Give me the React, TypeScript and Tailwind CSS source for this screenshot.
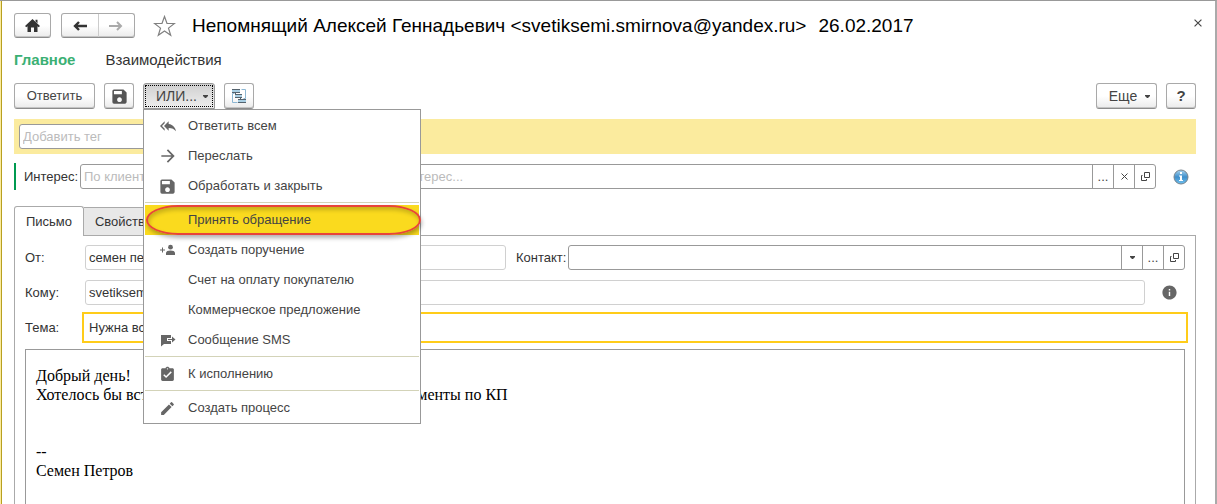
import { useState, type ReactNode } from "react";
import {
  MdArrowForward,
  MdAssignmentTurnedIn,
  MdEdit,
  MdInfo,
  MdReplyAll,
  MdSave,
} from "react-icons/md";

const buttonBase =
  "flex items-center justify-center rounded-[3px] border border-[#a9a9a9] border-b-[#8c8c8c] bg-linear-to-b from-white from-50% to-[#ebebeb] text-[#444] shadow-[inset_0_-1px_0_#c4c4c4]";

function Caret() {
  return (
    <svg width="5" height="3" viewBox="0 0 5 3" fill="#444" aria-hidden="true">
      <path d="M0 0h5v1L3 3H2L0 1z" />
    </svg>
  );
}

function HomeIcon() {
  return (
    <svg width="15" height="13" viewBox="0 0 15 13" fill="#333" aria-hidden="true">
      <path d="M7.500 0L15 7l-1.300 1.200L12.500 7.200V13H9V8.500H6V13H2.500V7.200L1.300 8.200 0 7z" />
      <path d="M10.500.8h2v3.500l-2-1.800z" />
    </svg>
  );
}

function StarIcon() {
  return (
    <svg width="23" height="22" viewBox="0 0 23 22" fill="none" stroke="#808080" strokeWidth="1.2" aria-hidden="true">
      <path d="M11.500 1.500l2.500 7h7.500l-6 4.600 2.200 7.200-6.200-4.300-6.200 4.300 2.200-7.200-6-4.600H9z" />
    </svg>
  );
}

function OpenIcon() {
  return (
    <svg width="9" height="9" viewBox="0 0 9 9" fill="none" stroke="#444" aria-hidden="true">
      <path d="M3.500 .5h5v5h-5zM1.500 3.500h-1v5h5v-1.500" />
    </svg>
  );
}

function CrossIcon({ size }: { size: number }) {
  return (
    <svg width={size} height={size} viewBox="0 0 7 7" stroke="#444" aria-hidden="true">
      <path d="M.5 .5l6 6M6.500 .5l-6 6" />
    </svg>
  );
}

function StructureIcon() {
  return (
    <svg width="16" height="16" viewBox="0 0 16 16" fill="none" aria-hidden="true">
      <path d="M3.500 5.500h-2v9h5M10.500 1.500h4v9h-2" stroke="#8db7d3" />
      <path d="M4.500 4v3.500M9.500 9.500V12" stroke="#55636e" />
      <path d="M1 2h8v2H1zM4 7h7v2H4zM7 12h8v2H7z" fill="#a9cfe4" />
      <path d="M1 1h8v1H1zM1 4h8v1H1zM4 6h7v1H4zM4 9h7v1H4zM7 11h8v1H7zM7 14h8v1H7z" fill="#55636e" />
    </svg>
  );
}

function AddPersonIcon() {
  return (
    <svg width="16" height="16" viewBox="0 0 16 16" fill="#666" aria-hidden="true">
      <circle cx="10.500" cy="5.200" r="2.400" />
      <path d="M6 13v-2C6 9.300 8 8.500 10.500 8.500s4.500.8 4.500 2.500v2zM2 5.500h1v2h2v1H3v2H2v-2H0v-1h2z" />
    </svg>
  );
}

function SmsIcon() {
  return (
    <svg width="16" height="16" viewBox="0 0 16 16" aria-hidden="true">
      <path d="M1 3h10v9H4l-3 2.500z" fill="#666" />
      <path d="M7 7.500h5" stroke="#fff" strokeWidth="3" />
      <path d="M8 7h4V4.500L15.500 7.500 12 10.500V8H8z" fill="#666" />
    </svg>
  );
}

function InfoBall() {
  return (
    <svg width="16" height="16" viewBox="0 0 16 16" role="img" aria-label="Справка">
      <defs>
        <linearGradient id="ball" x1="0" y1="0" x2="0" y2="1">
          <stop offset="0" stopColor="#a9d4ee" />
          <stop offset=".5" stopColor="#3f8fcb" />
          <stop offset="1" stopColor="#6fc0ee" />
        </linearGradient>
      </defs>
      <circle cx="8" cy="8" r="7" fill="url(#ball)" stroke="#77828c" />
      <path d="M7 3h2v2H7zM6 6.500h3V11h1v1H6v-1h1V7.500H6z" fill="#fff" />
    </svg>
  );
}

type Item = { label: string; icon?: ReactNode; active?: boolean };

const groups: Item[][] = [
  [
    { label: "Ответить всем", icon: <MdReplyAll size={16} /> },
    { label: "Переслать", icon: <MdArrowForward size={20} /> },
    { label: "Обработать и закрыть", icon: <MdSave size={19} /> },
  ],
  [
    { label: "Принять обращение", active: true },
    { label: "Создать поручение", icon: <AddPersonIcon /> },
    { label: "Счет на оплату покупателю" },
    { label: "Коммерческое предложение" },
    { label: "Сообщение SMS", icon: <SmsIcon /> },
  ],
  [{ label: "К исполнению", icon: <MdAssignmentTurnedIn size={17} /> }],
  [{ label: "Создать процесс", icon: <MdEdit size={17} /> }],
];

function Menu() {
  return (
    <div role="menu" className="absolute top-full left-0 z-10 w-[278px] border border-[#999] bg-white px-px pt-px">
      {groups.map((items, g) => (
        <div key={g} className={g > 0 ? "mt-px border-t border-[#d3d3b8] pt-0.5" : ""}>
          {items.map((item) => (
            <button
              key={item.label}
              role="menuitem"
              className={`relative flex h-[30px] w-full items-center text-left text-[13px] text-[#444] ${item.active ? "bg-[#fada1e]" : ""}`}
            >
              <span className="flex w-[43px] shrink-0 justify-center pl-0.5 text-[#666]">{item.icon}</span>
              {item.label}
              {item.active && (
                <span className="absolute inset-y-0 right-[-2px] left-px rounded-[32px/15px] border-2 border-[#e8443a] shadow-[1px_3px_4px_rgba(0,0,0,0.3),inset_1px_3px_4px_rgba(0,0,0,0.2)]" />
              )}
            </button>
          ))}
        </div>
      ))}
    </div>
  );
}

function Cell({ label, children }: { label: string; children: ReactNode }) {
  return (
    <button aria-label={label} className="flex w-[21px] shrink-0 items-center justify-center border-l border-[#999] text-[#444]">
      {children}
    </button>
  );
}

export default function App() {
  const [open, setOpen] = useState(true);
  return (
    <div className="flex h-screen overflow-hidden border-t border-r-2 border-t-[#999] border-r-[#aaa] bg-white font-['Liberation_Sans',Arial,sans-serif] text-[13px] text-[#333]">
      <div className="w-0.5 shrink-0 border-r border-[#b8a020] bg-[#fbeb9e]" />
      <main className="flex min-w-0 flex-1 flex-col pr-[19px] pl-3">
        <header className="flex pt-3">
          <button aria-label="Домой" className={`${buttonBase} w-[37px]`}>
            <HomeIcon />
          </button>
          <div className={`${buttonBase} ml-2.5 w-[74px]`}>
            <button aria-label="Назад" className="flex h-full flex-1 items-center justify-center border-r border-[#ccc]">
              <svg width="14" height="10" viewBox="0 0 14 10" fill="none" stroke="#333" strokeWidth="2.400">
                <path d="M14 5H2M6 1L2 5l4 4" />
              </svg>
            </button>
            <button aria-label="Вперед" className="flex h-full flex-1 items-center justify-center">
              <svg width="14" height="10" viewBox="0 0 14 10" fill="none" stroke="#aaa" strokeWidth="2">
                <path d="M0 5h12M8 1l4 4-4 4" />
              </svg>
            </button>
          </div>
          <button aria-label="В избранное" className="ml-[18px] flex items-center">
            <StarIcon />
          </button>
          <h1 className="ml-4 flex gap-3 text-[19px] leading-[25px] whitespace-nowrap text-black">
            <span>Непомнящий Алексей Геннадьевич &lt;svetiksemi.smirnova@yandex.ru&gt;</span>
            <span>26.02.2017</span>
          </h1>
          <button aria-label="Закрыть" className="mt-1.5 -mr-1.5 ml-auto h-2">
            <CrossIcon size={8} />
          </button>
        </header>

        <nav className="mt-3 flex gap-[30px] text-[15px] leading-5">
          <a href="#main" className="font-bold text-[#3bb074]">Главное</a>
          <a href="#interactions">Взаимодействия</a>
        </nav>

        <div className="mt-[13px] flex h-[26px] gap-[9px]">
          <button className={`${buttonBase} w-[81px]`}>Ответить</button>
          <button aria-label="Сохранить" className={`${buttonBase} w-[30px]`}>
            <MdSave size={19} color="#555" />
          </button>
          <div className="relative">
            <button
              aria-haspopup="menu"
              aria-expanded={open}
              onClick={() => setOpen(!open)}
              className="flex h-[26px] w-[72px] items-center justify-center rounded-t-[3px] border border-[#999] bg-linear-to-b from-[#d0d0d0] to-[#eee] p-px text-[14px] text-[#444]"
            >
              <span className="flex h-full w-full items-center justify-center gap-1.5 border border-dotted border-black pl-1.5">
                ИЛИ...
                <Caret />
              </span>
            </button>
            {open && <Menu />}
          </div>
          <button aria-label="Структура" className={`${buttonBase} w-[30px]`}>
            <StructureIcon />
          </button>
          <button className={`${buttonBase} ml-auto w-[61px] gap-2 pl-1.5 text-[14px]`}>
            Еще
            <Caret />
          </button>
          <button className={`${buttonBase} w-[30px] text-[15px] font-bold`}>?</button>
        </div>

        <div className="mt-2.5 bg-[#fbeb9e] p-[5px]">
          <input
            aria-label="Тег"
            placeholder="Добавить тег"
            className="block h-[25px] w-[280px] rounded-[3px] border border-[#999] bg-white px-[3px] placeholder:text-[#bbb]"
          />
        </div>

        <div className="mt-[9px] flex items-center border-l-2 border-[#009a50] pl-2">
          <label htmlFor="interest" className="w-14">Интерес:</label>
          <div className="my-px flex h-[25px] flex-1 rounded-[3px] border border-[#999]">
            <input
              id="interest"
              placeholder="По клиенту нет активных интересов. Выберите свой интерес..."
              className="min-w-0 flex-1 px-[3px] placeholder:text-[#bbb]"
            />
            <Cell label="Выбрать интерес">...</Cell>
            <Cell label="Очистить интерес"><CrossIcon size={7} /></Cell>
            <Cell label="Открыть интерес"><OpenIcon /></Cell>
          </div>
          <span className="mr-[7px] ml-[17px]"><InfoBall /></span>
        </div>

        <div role="tablist" className="mt-4 flex">
          <button role="tab" aria-selected="true" className="relative z-1 -mb-px h-[30px] w-[70px] rounded-t-[3px] border border-b-0 border-[#aaa] bg-white">
            Письмо
          </button>
          <button role="tab" aria-selected="false" className="mt-px h-7 w-[80px] border-t border-r border-[#aaa] bg-[#e8e8e8]">
            Свойства
          </button>
        </div>

        <section className="flex min-h-0 flex-1 flex-col border border-b-0 border-[#aaa] pt-[9px] pr-[9px] pl-2.5">
          <div className="flex items-center pr-px">
            <label htmlFor="from" className="w-[60px]">От:</label>
            <input id="from" defaultValue="семен петров" className="h-[25px] w-[421px] rounded-[3px] border border-[#d0d0d0] px-[3px]" />
            <label htmlFor="contact" className="ml-2.5 w-[52px]">Контакт:</label>
            <div className="flex h-[25px] flex-1 rounded-[3px] border border-[#999]">
              <input id="contact" className="min-w-0 flex-1 px-[3px]" />
              <Cell label="Список контактов"><Caret /></Cell>
              <Cell label="Выбрать контакт">...</Cell>
              <Cell label="Открыть контакт"><OpenIcon /></Cell>
            </div>
          </div>
          <div className="mt-2.5 flex items-center">
            <label htmlFor="to" className="w-[60px]">Кому:</label>
            <input id="to" defaultValue="svetiksemi.smirnova@yandex.ru" className="h-[25px] min-w-0 flex-1 rounded-[3px] border border-[#d0d0d0] px-[3px]" />
            <MdInfo size={17} color="#666" className="mr-2 ml-4" />
          </div>
          <div className="mt-[7px] -mr-0.5 flex items-center">
            <label htmlFor="subject" className="w-[57px]">Тема:</label>
            <input id="subject" defaultValue="Нужна встреча" className="h-[31px] min-w-0 flex-1 border-2 border-[#ffcc19] px-[5px] outline-none" />
          </div>
          <textarea
            aria-label="Текст письма"
            className="mt-1.5 mr-px min-h-0 flex-1 resize-none overflow-hidden border border-b-0 border-[#999] px-2.5 pt-4 font-['Liberation_Serif',serif] text-[16px] leading-[19px] text-black outline-none"
            defaultValue={"Добрый день!\nХотелось бы встретиться и обсудить все условия и документы по КП\n\n\n--\nСемен Петров"}
          />
        </section>
      </main>
    </div>
  );
}
